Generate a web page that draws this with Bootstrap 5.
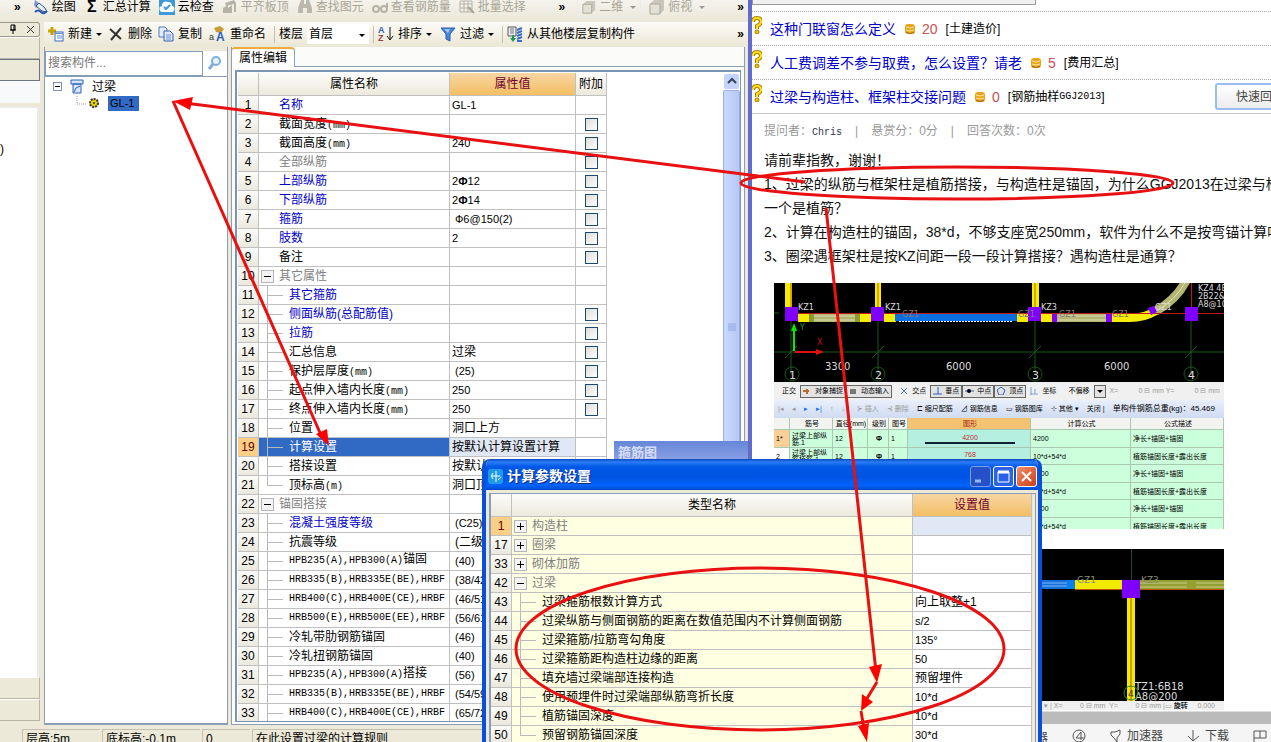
<!DOCTYPE html>
<html lang="zh-CN">
<head>
<meta charset="utf-8">
<meta name="viewport" content="width=device-width, initial-scale=1">
<title>计算参数设置</title>
<link href="https://cdn.jsdelivr.net/npm/bootstrap@5.3.0/dist/css/bootstrap.min.css" rel="stylesheet">
<script src="https://cdn.jsdelivr.net/npm/bootstrap@5.3.0/dist/js/bootstrap.bundle.min.js"></script>
<style>
body{font:12px/18px "Liberation Sans","Noto Sans CJK SC",sans-serif;color:#000;background:#fff}
button{border:0;background:none;padding:0;color:inherit;font:inherit;white-space:nowrap}
svg{display:block;flex:none}
.desktop{height:100vh;overflow:hidden;white-space:nowrap}
.app{width:752px;flex:none;background:#ece9d8;border-right:4px solid #5f6ccb;overflow:hidden}
.bar1{height:22px;padding:0 4px 0 14px;background:linear-gradient(#f4f3ec,#ebe8d8)}
.bar1 .items{height:14px}
.bar2{height:25px;background:linear-gradient(#fbfaf6,#ebe7d5)}
.tool{display:inline-flex;align-items:center;gap:4px}
.bar1 .tool{gap:3px}
.tool.off{color:#a8a595}
.caret-s{border:3px solid transparent;border-top-color:#000;border-bottom:0;display:inline-block}
.off .caret-s{border-top-color:#999}
.vsep{width:1px;height:17px;background:#c5c1b0}
.floor{appearance:none;border:0;width:62px;height:20px;background:#fff;font-size:12px;line-height:16px;padding:0 2px}
.dock{width:40px;flex:none}
.dock .cap{height:15px;border:1px solid #9d9a8c;border-left:0;border-radius:0 3px 3px 0;padding-right:4px}
.slab{height:22px;border:1px solid #b9b6a6;border-left:0;border-top-color:#fff}
.dockbody{border-right:2px solid #8b9eb8;background:#fff;margin-right:1px}
.srch{border:1px solid #7f9db9;height:25px;width:158px;padding:0 2px;font-size:12px;border-radius:0;outline:0}
.srch::placeholder{color:#777;opacity:1}
.comp{width:184px;flex:none;border:1px solid #8b9eb8;border-width:0 1px}
.treebox{background:#fff;border-top:1px solid #8b9eb8;border-bottom:2px solid #8b9eb8;padding-top:1px}
.pm{width:9px;height:9px;border:1px solid #7f95b0;background:#fff;position:relative;flex:none}
.pm::after{content:"";position:absolute;left:1px;right:1px;top:3px;height:1px;background:#000}
.seltag{background:#316ac5;padding:0 4px 0 2px;line-height:15px;font-size:11px;width:31px}
.props{border:1px solid #8b9eb8;border-top:0;background:#fcfcfa;margin-right:3px}
.tabtop{height:20px;background:#fbfbfa;border-bottom:1px solid #8b9eb8}
.tabon{width:64px;height:20px;background:#fff;border:1px solid #8b9eb8;border-top:2px solid #efaa3c;border-bottom:0;border-radius:4px 4px 0 0;text-align:center;line-height:18px;margin-left:-1px}
.gridbox{border:1px solid #7d95b5;border-width:2px 1px 1px 2px;background:#fff;margin:3px 3px 2px;padding:1px 0 0 1px;overflow:hidden}
.grid{border-collapse:separate;border-spacing:0;table-layout:fixed;flex:none}
.grid th,.grid td{border-right:1px solid #c0c0c0;border-bottom:1px solid #c0c0c0;padding:0;height:19px;line-height:18px;font-weight:400;overflow:hidden}
.grid thead th{height:23px;line-height:22px;background:linear-gradient(#fcfcfa,#ece9dd);text-align:center}
.grid thead th.hot{background:linear-gradient(#f7d5a4,#f3bf63);color:#700030}
.grid tbody th{background:linear-gradient(#fbfbf8,#ebe9de);text-align:center}
.grid tbody th.hot{background:#fbcf85;color:#600}
.grid td{padding-left:2px}
.grid td.lvl{padding-left:20px}
.grid td.leaf{padding-left:30px;background-image:linear-gradient(#b9b9b9,#b9b9b9),linear-gradient(#b9b9b9,#b9b9b9);background-repeat:no-repeat;background-position:8px 0,8px 9px;background-size:1px 100%,16px 1px}
.grid td.leaf.end{background-size:1px 9px,16px 1px}
.grid td.in{padding-left:5px}
.num{font-size:11px}
.mono{font:10px/1 "Liberation Mono","Noto Sans CJK SC",monospace}
.mono b{font:12px/1 "Noto Sans CJK SC",sans-serif}
.blue{color:#0000c8}.gray{color:#808080}
.grid td.sel{background-color:#316ac5;color:#fff}
.grid td.cur{background:#e0e8f5}
.tg{width:13px;height:13px;border:1px solid #b5b5b5;background:#f4f4f4;display:inline-block;vertical-align:-2px;margin-right:5px;position:relative}
.tg::after,.tg.plus::before{content:"";position:absolute;left:2px;top:5px;width:7px;height:1px;background:#000}
.tg.plus::before{left:5px;top:2px;width:1px;height:7px}
.grid input{appearance:none;width:13px;height:13px;border:1px solid #1c4a70;background:linear-gradient(135deg,#dcdcd7,#fff);display:block;margin:1px auto 0 7px}
.vscroll{width:17px;background:#fff}
.sbtn{height:17px;width:17px;background:#c3d3fb;border:1px solid #fff;border-radius:3px}
.thumb{background:linear-gradient(90deg,#c9d8fd,#b5c8f5);border:1px solid #98b0e5;border-radius:2px}
.status{height:13px;padding-left:22px;overflow:hidden}
.status span{border-left:1px solid #c5c2b2;border-top:1px solid #c5c2b2;padding-left:3px;margin-right:2px;height:20px;line-height:18px}
.dockwin{left:614px;top:441px;width:134px;height:22px;background:linear-gradient(#6686d8,#8fa3e6);color:#d5dcf8;font-weight:700;padding:3px 4px;font-size:13px}
.dlg{left:482px;top:459px;width:560px;bottom:-20px;background:#ece9d8;border:4px solid #0a4fdc;border-top:0;border-radius:8px 8px 0 0;overflow:hidden}
.dlgbar{height:31px;margin:0 -4px;padding:3px 5px 0 6px;background:linear-gradient(#0b48b8,#2a7cf8 10%,#0058e6 25%,#0054e3 60%,#0264fe 85%,#0048c8);color:#fff;font-weight:700;font-size:14px;text-shadow:1px 1px #0a2a80}
.wbtn{width:21px;height:21px;border:1px solid #fff;border-radius:3px;background:#2a62e8}
.wbtn.dim{background:#2450c8;border-color:#7d9cea}.wbtn.x{background:linear-gradient(135deg,#f0906c,#d03c14)}
.dgrid{border:1px solid #8b9eb8;border-left-width:2px;background:#ece9d8;margin:3px 2px 0 3px}
.dlg td{background-color:#fff}.dlg td:nth-child(2){background-color:#ffffe1}
.web{min-width:0;overflow:hidden;background:#fff}
.tabline{height:12px;border-bottom:1px dotted #aaa}
.tabline i{display:block;height:5px;width:284px;background:#f0f0f0;border:1px solid #999;border-top:0}
.q{height:34px;border-bottom:1px dotted #aaa;font-size:12px}
.q.last{border-bottom:1px solid #c8c8c8}
.q a{font-size:14px;color:#00c;text-decoration:none;margin:0 8px}
.q em{font-style:normal;font-size:14px;color:#c85050;margin:0 8px 0 6px}
.fast{border:2px solid #9dbdf0;border-radius:3px;width:90px;height:27px;background:linear-gradient(#fff,#ececec);color:#444;margin-left:auto;margin-right:-34px}
.meta{height:34px;padding-left:12px;color:#999;line-height:34px}
.meta i{font-style:normal;margin:0 13px}
.meta a{color:#335;text-decoration:none;font:10px "Liberation Mono",monospace}
.post{padding:0 0 0 12px;font-size:14px;line-height:24px;color:#111}
.shot{width:450px;margin-left:22px;overflow:hidden;font-size:7px;line-height:12px}
.cadbar{height:18px;background:#f0f0f0;padding:0 4px;justify-content:space-between}
.cadbar button{border:1px solid #666;height:13px;padding:0 2px;display:inline-flex;align-items:center;gap:2px;background:#e3e3e3}
.cadbar.two{background:linear-gradient(#e9effb,#cfdbf0);padding-right:9px}
.kg{font-size:8px}
.off2{color:#999}
.rebar{table-layout:fixed;width:450px;border-collapse:separate;border-spacing:0;line-height:7px}
.rebar th,.rebar td{border:solid #a8c8b0;border-width:0 1px 1px 0;padding:0 0 0 2px;height:18px;overflow:hidden;font-weight:400}
.rebar tr:nth-child(even) td{height:17px}
.rebar thead th{height:12px;text-align:center;background:#f3f3f0}
.rebar td{background:#ccffdc}
.rebar .fig{background:#b5efdf;color:#c03030;text-align:center}
.rebar .fig u{display:block;height:2px;width:90px;background:#123;margin:1px auto 0}
.greybar{height:13px;background:#bbb;border-top:1px solid #ddd}
.bstat{height:18px;background:#f5f5f5;color:#444;padding-left:284px;padding-top:5px}
.bstat button{display:inline-flex;align-items:center;gap:5px}
.marks{left:0;top:0;pointer-events:none}
</style>
</head>
<body>
<svg width="0" height="0" class="position-absolute">
<symbol id="i-pen" viewBox="0 0 16 16"><path d="M2 1l5 4-4 4-2-3z" fill="#7d97cf"/><path d="M6 4l6 5 2 4-5-1-6-5z" fill="#e9eefb" stroke="#33518f"/><path d="M2 13q3-3 6 0t6-1" fill="none" stroke="#2754b8" stroke-width="2"/></symbol>
<symbol id="i-cloud" viewBox="0 0 16 16"><rect width="16" height="16" fill="#3d9ad6"/><path d="M4 13a3 3 0 0 1-1-6 4 4 0 0 1 6-4 4 4 0 0 1 4 4 3 3 0 0 1-1 6z" fill="#fff"/><path d="M5 8l2 2 4-4" stroke="#3d9ad6" stroke-width="2" fill="none"/></symbol>
<symbol id="i-board" viewBox="0 0 16 16"><path d="M1 14V9l5-3v3l4-3v8zM3 4l9-3 2 3v9h-2V5L4 7z" fill="#b5b3a5"/></symbol>
<symbol id="i-bino" viewBox="0 0 16 16"><path d="M4 1h3v4h2V1h3l3 8v5h-5V9H6v5H1V9z" fill="#bbb9ad"/></symbol>
<symbol id="i-glass" viewBox="0 0 16 16"><g fill="none" stroke="#b5b3a5" stroke-width="2"><circle cx="4" cy="10" r="3"/><circle cx="12" cy="10" r="3"/><path d="M7 10h2M15 9V4"/></g></symbol>
<symbol id="i-tbl" viewBox="0 0 16 16"><path d="M1 2h12v11H1zM1 5h12M1 9h12M5 2v11M9 2v11" fill="none" stroke="#b5b3a5"/><path d="M9 8l6 6" stroke="#a5a395" stroke-width="2"/></symbol>
<symbol id="i-box" viewBox="0 0 16 16"><path d="M1 5l4-4h10v10l-4 4H1z" fill="#c9c7bb"/><path d="M1 5h10v10H1z" fill="#e3e1d6" stroke="#aaa89a"/></symbol>
<symbol id="i-new" viewBox="0 0 16 16"><path d="M4 1v8M0 5h8" stroke="#c7a500" stroke-width="3"/><rect x="7" y="6" width="8" height="9" fill="#fff" stroke="#3a6cc0"/><path d="M7 7.500h8M9 10h5M9 12h5" stroke="#5f90d8"/></symbol>
<symbol id="i-del" viewBox="0 0 16 16"><path d="M2 3l11 10M13 2L3 14" stroke="#333" stroke-width="2"/></symbol>
<symbol id="i-copy" viewBox="0 0 16 16"><path d="M1 1h6l2 2v8H1z" fill="#e3ecfb" stroke="#5478b8"/><path d="M6 5h6l3 3v7H6z" fill="#dce8fb" stroke="#3a62b0"/><path d="M8 9h5M8 11h5M8 13h5" stroke="#6b93d5"/></symbol>
<symbol id="i-ren" viewBox="0 0 16 16"><path d="M5 2l6-2 4 3-3 4-5-1z" fill="#c79a3a"/><text x="0" y="14" font-size="9" fill="#333">a</text><text x="7" y="15" font-size="12" font-weight="700" fill="#2a5cb8">A</text></symbol>
<symbol id="i-az" viewBox="0 0 16 16"><text x="0" y="7" font-size="9" font-weight="700" fill="#3560b0">A</text><text x="0" y="15" font-size="9" font-weight="700" fill="#a04040">Z</text><path d="M12 1v12M9 10l3 4 3-4" fill="none" stroke="#111"/></symbol>
<symbol id="i-fun" viewBox="0 0 16 16"><path d="M1 2h14l-5 6v7l-4-2V8z" fill="#4d86e0" stroke="#2a58b0"/><path d="M4 3h6L8 7z" fill="#a5c8fa"/></symbol>
<symbol id="i-fl" viewBox="0 0 16 16"><path d="M1 1h8v9H1z" fill="#eee" stroke="#555"/><path d="M3 3h4M3 5h4M3 7h4" stroke="#777"/><path d="M10 4l5-2M10 7l5-2M10 10l5-2M10 13l5-2M10 15h5" stroke="#3a6cc8" stroke-width="2"/><path d="M5 9v3H3l3 4 3-4H7V9z" fill="#1d9a4a"/></symbol>
<symbol id="i-q" viewBox="0 0 10 18"><path d="M1 6q0-4 4-4t4 4q0 2-4 4v3" fill="none" stroke="#a87b00" stroke-width="4"/><path d="M1 6q0-4 4-4t4 4q0 2-4 4v3" fill="none" stroke="#ffe01a" stroke-width="2"/><circle cx="5" cy="16" r="2" fill="#f0c800" stroke="#a87b00"/></symbol>
<symbol id="i-coin" viewBox="0 0 12 12"><rect x="1" y="1" width="10" height="10" rx="3" fill="#eaa51c"/><path d="M2 4q4 2 8 0M2 7q4 2 8 0" fill="none" stroke="#ffe9a0"/><path d="M2 9.500q4 2 8 0" fill="none" stroke="#a8650a"/></symbol>
</svg>

<div class="desktop d-flex position-relative">
<div class="app d-flex flex-column">
  <div class="bar1"><div class="items d-flex align-items-center gap-2">
    <b>»</b>
    <button class="tool ms-1"><svg width="16" height="16"><use href="#i-pen"/></svg>绘图</button>
    <button class="tool"><b class="fs-6 text-center" style="width:16px">Σ</b>汇总计算</button>
    <button class="tool"><svg width="16" height="16"><use href="#i-cloud"/></svg>云检查</button>
    <button class="tool off"><svg width="16" height="16"><use href="#i-board"/></svg>平齐板顶</button>
    <button class="tool off"><svg width="16" height="16"><use href="#i-bino"/></svg>查找图元</button>
    <button class="tool off"><svg width="16" height="16"><use href="#i-glass"/></svg>查看钢筋量</button>
    <button class="tool off"><svg width="16" height="16"><use href="#i-tbl"/></svg>批量选择</button>
    <b class="ms-auto me-1">»</b>
    <button class="tool off border border-secondary-subtle px-1"><svg width="14" height="14"><use href="#i-box"/></svg>二维<i class="caret-s ms-1"></i></button>
    <button class="tool off"><svg width="16" height="16"><use href="#i-box"/></svg>俯视<i class="caret-s ms-1"></i></button>
    <b class="ms-4">»</b>
  </div></div>
  <div class="d-flex flex-fill" style="min-height:0">
    <div class="dock d-flex flex-column">
      <div class="cap d-flex align-items-center justify-content-end gap-2"><svg width="10" height="10"><path d="M2 6h6M3 1h4v5H3zM6 1v5M5 6v4" fill="none" stroke="#000"/></svg><svg width="9" height="9"><path d="M1 1l7 7M8 1L1 8" stroke="#333"/></svg></div>
      <div class="slab"></div><div class="slab border-secondary"></div><div class="slab mb-1 bg-light border-0"></div>
      <div class="dockbody flex-fill border-top border-secondary-subtle pt-4"><div class="pt-2">)</div></div>
      <div class="slab"></div><div class="slab mb-1"></div>
    </div>
    <div class="flex-fill d-flex flex-column ps-1" style="min-width:0">
      <div class="bar2 d-flex align-items-center ps-1 pe-1">
        <div class="d-flex align-items-center" style="gap:6px">
        <button class="tool"><svg width="16" height="16"><use href="#i-new"/></svg>新建<i class="caret-s"></i></button>
        <button class="tool"><svg width="16" height="16"><use href="#i-del"/></svg>删除</button>
        <button class="tool"><svg width="16" height="16"><use href="#i-copy"/></svg>复制</button>
        <button class="tool"><svg width="18" height="16"><use href="#i-ren"/></svg>重命名</button>
        </div>
        <i class="vsep ms-2 me-1"></i><label for="floor" class="me-1">楼层</label>
        <div class="position-relative"><select id="floor" class="floor"><option>首层</option></select><i class="caret-s position-absolute end-0 top-50 me-1"></i></div>
        <i class="vsep mx-1"></i>
        <button class="tool me-2"><svg width="16" height="16"><use href="#i-az"/></svg>排序<i class="caret-s"></i></button>
        <button class="tool me-2"><svg width="16" height="16"><use href="#i-fun"/></svg>过滤<i class="caret-s"></i></button>
        <i class="vsep me-1"></i>
        <button class="tool"><svg width="16" height="16"><use href="#i-fl"/></svg>从其他楼层复制构件</button>
        <b class="ms-auto">»</b>
      </div>
      <div class="d-flex flex-fill" style="min-height:0">
        <div class="comp d-flex flex-column pt-1">
          <div class="d-flex align-items-center bg-white"><input class="srch" type="text" placeholder="搜索构件..." aria-label="搜索构件"><button class="ms-1" aria-label="搜索"><svg width="16" height="16"><circle cx="9" cy="6" r="4" fill="#e8f2fd" stroke="#7db0e0" stroke-width="2"/><path d="M6 9l-4 5" stroke="#7db0e0" stroke-width="3"/></svg></button></div>
          <div class="treebox flex-fill">
            <div class="d-flex align-items-center ps-2 gap-2"><i class="pm"></i><svg width="14" height="15"><path d="M1 1h12v4H1zM3 5h8v9H3z" fill="#d5e5fb" stroke="#2a62b8"/><path d="M4 13q1-5 6-6" fill="none" stroke="#2a62b8"/></svg><span>过梁</span></div>
            <div class="d-flex align-items-center gap-2 ps-4"><svg width="20" height="14"><path d="M8 0v8h10" fill="none" stroke="#999" stroke-dasharray="1 1"/></svg><svg width="11" height="11" style="margin-left:-8px"><circle cx="5" cy="5" r="4" fill="#e6d000" stroke="#333" stroke-width="2" stroke-dasharray="2 1"/><circle cx="5" cy="5" r="1" fill="#333"/></svg><span class="seltag">GL-1</span></div>
          </div>
        </div>
        <div class="flex-fill d-flex flex-column props" style="margin-left:3px;min-width:0">
          <div class="tabtop"><div class="tabon">属性编辑</div></div>
          <div class="gridbox flex-fill d-flex" style="min-height:0">
            <table class="grid align-self-start" style="width:369px">
            <colgroup><col style="width:21px"><col style="width:191px"><col style="width:126px"><col style="width:31px"></colgroup>
            <thead><tr><th></th><th>属性名称</th><th class="hot">属性值</th><th>附加</th></tr></thead>
            <tbody>
            <tr><th>1</th><td class="lvl blue">名称</td><td class="num">GL-1</td><td></td></tr>
            <tr><th>2</th><td class="lvl">截面宽度<span class="mono">(mm)</span></td><td></td><td><input type="checkbox" aria-label="附加 2"></td></tr>
            <tr><th>3</th><td class="lvl">截面高度<span class="mono">(mm)</span></td><td class="num">240</td><td><input type="checkbox" aria-label="附加 3"></td></tr>
            <tr><th>4</th><td class="lvl gray">全部纵筋</td><td></td><td><input type="checkbox" aria-label="附加 4"></td></tr>
            <tr><th>5</th><td class="lvl blue">上部纵筋</td><td class="num">2<b>Ф</b>12</td><td><input type="checkbox" aria-label="附加 5"></td></tr>
            <tr><th>6</th><td class="lvl blue">下部纵筋</td><td class="num">2<b>Ф</b>14</td><td><input type="checkbox" aria-label="附加 6"></td></tr>
            <tr><th>7</th><td class="lvl blue">箍筋</td><td class="in num">Ф6@150(2)</td><td><input type="checkbox" aria-label="附加 7"></td></tr>
            <tr><th>8</th><td class="lvl blue">肢数</td><td class="num">2</td><td><input type="checkbox" aria-label="附加 8"></td></tr>
            <tr><th>9</th><td class="lvl">备注</td><td></td><td><input type="checkbox" aria-label="附加 9"></td></tr>
            <tr><th>10</th><td class="gray"><button class="tg" aria-label="折叠"></button>其它属性</td><td></td><td></td></tr>
            <tr><th>11</th><td class="leaf blue">其它箍筋</td><td></td><td></td></tr>
            <tr><th>12</th><td class="leaf blue">侧面纵筋(总配筋值)</td><td></td><td><input type="checkbox" aria-label="附加 12"></td></tr>
            <tr><th>13</th><td class="leaf blue">拉筋</td><td></td><td><input type="checkbox" aria-label="附加 13"></td></tr>
            <tr><th>14</th><td class="leaf">汇总信息</td><td>过梁</td><td><input type="checkbox" aria-label="附加 14"></td></tr>
            <tr><th>15</th><td class="leaf">保护层厚度<span class="mono">(mm)</span></td><td class="in num">(25)</td><td><input type="checkbox" aria-label="附加 15"></td></tr>
            <tr><th>16</th><td class="leaf">起点伸入墙内长度<span class="mono">(mm)</span></td><td class="num">250</td><td><input type="checkbox" aria-label="附加 16"></td></tr>
            <tr><th>17</th><td class="leaf">终点伸入墙内长度<span class="mono">(mm)</span></td><td class="num">250</td><td><input type="checkbox" aria-label="附加 17"></td></tr>
            <tr><th>18</th><td class="leaf">位置</td><td>洞口上方</td><td></td></tr>
            <tr><th class="hot">19</th><td class="leaf sel">计算设置</td><td class="cur">按默认计算设置计算</td><td></td></tr>
            <tr><th>20</th><td class="leaf">搭接设置</td><td>按默认搭接设置计算</td><td></td></tr>
            <tr><th>21</th><td class="leaf end">顶标高<span class="mono">(m)</span></td><td>洞口顶标高</td><td></td></tr>
            <tr><th>22</th><td class="gray"><button class="tg" aria-label="折叠"></button>锚固搭接</td><td></td><td></td></tr>
            <tr><th>23</th><td class="leaf blue">混凝土强度等级</td><td class="in num">(C25)</td><td></td></tr>
            <tr><th>24</th><td class="leaf">抗震等级</td><td class="in">(二级抗震)</td><td></td></tr>
            <tr><th>25</th><td class="leaf mono">HPB235(A),HPB300(A)<b>锚固</b></td><td class="in num">(40)</td><td></td></tr>
            <tr><th>26</th><td class="leaf mono">HRB335(B),HRB335E(BE),HRBF</td><td class="in num">(38/42)</td><td></td></tr>
            <tr><th>27</th><td class="leaf mono">HRB400(C),HRB400E(CE),HRBF</td><td class="in num">(46/51)</td><td></td></tr>
            <tr><th>28</th><td class="leaf mono">HRB500(E),HRB500E(EE),HRBF</td><td class="in num">(56/61)</td><td></td></tr>
            <tr><th>29</th><td class="leaf">冷轧带肋钢筋锚固</td><td class="in num">(46)</td><td></td></tr>
            <tr><th>30</th><td class="leaf">冷轧扭钢筋锚固</td><td class="in num">(40)</td><td></td></tr>
            <tr><th>31</th><td class="leaf mono">HPB235(A),HPB300(A)<b>搭接</b></td><td class="in num">(56)</td><td></td></tr>
            <tr><th>32</th><td class="leaf mono">HRB335(B),HRB335E(BE),HRBF</td><td class="in num">(54/59)</td><td></td></tr>
            <tr><th>33</th><td class="leaf mono">HRB400(C),HRB400E(CE),HRBF</td><td class="in num">(65/72)</td><td></td></tr>
            </tbody></table>
            <div class="vscroll d-flex flex-column ms-auto"><button class="sbtn" aria-label="向上"><svg width="15" height="15"><path d="M4 9l4-4 4 4" fill="none" stroke="#345" stroke-width="2"/></svg></button><div class="thumb flex-fill"><svg width="15" height="480"><path d="M4 233h8M4 235h8M4 237h8M4 239h8" stroke="#8fa8e0"/></svg></div></div>
          </div>
        </div>
      </div>
    </div>
  </div>
  <div class="status d-flex mt-1"><span style="width:78px">层高:5m</span><span style="width:98px">底标高:-0.1m</span><span style="width:48px">0</span><span class="flex-fill">在此设置过梁的计算规则</span></div>
</div>

<div class="web flex-fill d-flex flex-column">
  <div class="tabline"><i></i></div>
  <div class="q d-flex align-items-center"><svg width="10" height="18" class="mb-2"><use href="#i-q"/></svg><a href="#">这种门联窗怎么定义</a><svg width="12" height="12"><use href="#i-coin"/></svg><em>20</em>[土建造价]</div>
  <div class="q d-flex align-items-center"><svg width="10" height="18" class="mb-2"><use href="#i-q"/></svg><a href="#">人工费调差不参与取费，怎么设置？请老</a><svg width="12" height="12"><use href="#i-coin"/></svg><em>5</em>[费用汇总]</div>
  <div class="q last d-flex align-items-center"><svg width="10" height="18" class="mb-2"><use href="#i-q"/></svg><a href="#">过梁与构造柱、框架柱交接问题</a><svg width="12" height="12"><use href="#i-coin"/></svg><em>0</em>[钢筋抽样<span class="mono">GGJ2013</span>]<button class="fast">快速回复</button></div>
  <div class="meta">提问者：<a href="#">Chris</a><i>|</i>悬赏分：0分<i>|</i>回答次数：0次</div>
  <div class="post">请前辈指教，谢谢！<br>1、过梁的纵筋与框架柱是植筋搭接，与构造柱是锚固，为什么GGJ2013在过梁与框架柱<br>一个是植筋？<br>2、计算在构造柱的锚固，38*d，不够支座宽250mm，软件为什么不是按弯锚计算呢？<br>3、圈梁遇框架柱是按KZ间距一段一段计算搭接？遇构造柱是通算？</div>
  <div class="shot" style="margin-top:15px">
    <svg width="450" height="99" viewBox="0 0 450 99" font-family="DejaVu Sans,sans-serif" fill="#ddd">
      <rect width="450" height="99" fill="#000"/>
      <path d="M17 38v54M104 38v54M261 38v54M417 38v54M0 69h450M11 75l12-12M98 75l12-12M255 75l12-12M411 75l12-12M0 30h5" stroke="#155a1c" fill="none"/>
      <path d="M11 0h7v24h-7zM101 0h6v24h-6zM258 0h7v24h-7zM24 30h73v9H24zM110 30h12v9h-12zM243 30h11v9h-11zM267 30h11v9h-11z" fill="#f5ec00"/>
      <path d="M104 0v24M261 0v24M17 0v24" stroke="#c06010"/>
      <path d="M35 31h51v8H35zM283 31h50v8h-50z" fill="#b3b573"/><path d="M36 33h49M36 37h49M284 33h48M284 37h48" stroke="#dcdcae"/>
      <path d="M35 31h5v8h-5zM81 31h5v8h-5z" fill="#8c9a35"/>
      <path d="M338 35h18q14 0 26-7" stroke="#f5ec00" stroke-width="8" fill="none"/>
      <path d="M382 28q20-11 30-30" stroke="#b3b573" stroke-width="9" fill="none"/><path d="M382 28q20-11 30-30" stroke="#e2e2bc" fill="none"/>
      <path d="M121 30h122v8H121z" fill="#0a6fe0"/><path d="M125 38.500h114" stroke="#fff" stroke-dasharray="2 1"/>
      <path d="M24 30.500h426M417.500 0v24" stroke="#c01818"/>
      <path d="M11 24h13v14H11zM97 24h13v14H97zM254 24h13v14h-13zM411 24h13v14h-13zM278 31h5v8h-5zM332 31h6v8h-6zM374 25l6-2 3 6-6 3z" fill="#8000ff"/>
      <path d="M20 68V45" stroke="#0e0" stroke-width="2"/><path d="M17 48l3-8 3 8z" fill="#0e0"/><path d="M21 69h22" stroke="#e01010" stroke-width="2"/><path d="M42 66l8 3-8 3z" fill="#e01010"/>
      <g font-size="8"><text x="24" y="27">KZ1</text><text x="111" y="27">KZ1</text><text x="267" y="27">KZ3</text><text x="424" y="8">KZ4 4B</text><text x="424" y="16">2B22&amp;</text><text x="424" y="24">A8@10</text><text x="381" y="27">GZ1</text>
      <text x="26" y="47" fill="#0a0">Y</text><text x="43" y="62" fill="#c01010">X</text>
      <g fill="#8a7474"><text x="128" y="34">GZ1</text><text x="244" y="34">GZ1</text><text x="285" y="34">GZ1</text><text x="338" y="34">GZ1</text></g></g>
      <g font-size="11"><text x="51" y="87" font-size="10">3300</text><text x="172" y="87" font-size="10">6000</text><text x="330" y="87" font-size="10">6000</text><text x="15" y="96">1</text><text x="101" y="96">2</text><text x="258" y="96">3</text><text x="414" y="96">4</text></g>
      <g fill="none" stroke="#155a1c"><circle cx="18" cy="91" r="7"/><circle cx="104" cy="91" r="7"/><circle cx="261" cy="91" r="7"/><circle cx="417" cy="91" r="7"/></g>
    </svg>
    <div class="cadbar d-flex align-items-center"><span class="ps-1">正交</span><div class="d-flex"><button><svg width="10" height="8"><path d="M0 4h6M4 2v5" stroke="#c06a20" stroke-width="2"/></svg>对象捕捉</button><button><svg width="10" height="8"><path d="M1 2h6v5H1z" fill="#777"/></svg>动态输入</button></div><svg width="8" height="8" class="ms-1"><path d="M1 1l6 6M7 1L1 7" stroke="#4a80c8"/></svg>交点<div class="d-flex"><button><svg width="10" height="8"><path d="M0 7h9M5 0v7" stroke="#2a62b8"/></svg>垂点</button><button><svg width="10" height="8"><path d="M0 4h9" stroke="#2a62b8"/><circle cx="4" cy="4" r="2"/></svg>中点</button><button><svg width="10" height="8"><path d="M4 0l4 3-2 5H2L0 3z" fill="none" stroke="#2a62b8"/></svg>顶点</button></div><svg width="8" height="8"><path d="M0 7h8M1 0v8M5 2v5" stroke="#7fa5d8"/></svg><span class="pe-2">坐标</span>不偏移<button><i class="caret-s"></i></button><span class="off2">X=</span><span class="off2 ps-3">0 ⊟ mm Y=</span><span class="off2 ps-3">0 ⊟ mm</span></div>
    <div class="cadbar two d-flex align-items-center"><span class="off2">|◂</span><span class="off2">◂</span><span class="text-primary">▸</span><span class="text-primary">▸|</span><span class="off2">↑</span><span class="off2">↓ |</span><span class="off2">⊱ 插入</span><span class="off2">⊰ 删除</span><span>⊏ 缩尺配筋</span><span>⊿ 钢筋信息</span><span>▭ 钢筋图库</span><span>⊹ 其他 ▾</span><span>关闭 |</span><span class="kg">单构件钢筋总重(kg)：45.469</span></div>
    <div style="height:111px;overflow:hidden">
    <table class="rebar"><colgroup><col style="width:16px"><col style="width:43px"><col style="width:35px"><col style="width:21px"><col style="width:19px"><col style="width:123px"><col style="width:100px"><col style="width:93px"></colgroup>
    <thead><tr><th></th><th>筋号</th><th>直径(mm)</th><th>级别</th><th>图号</th><th style="background:#f4c271;color:#a02010">图形</th><th>计算公式</th><th>公式描述</th></tr></thead>
    <tbody>
    <tr><td style="background:#fbcf95">1*</td><td>过梁上部纵<br>筋.1</td><td>12</td><td class="text-center"><b>Ф</b></td><td>1</td><td class="fig">4200<u></u></td><td>4200</td><td>净长+锚固+锚固</td></tr>
    <tr><td class="bg-white">2</td><td>过梁上部纵<br>筋植筋.1</td><td>12</td><td class="text-center"><b>Ф</b></td><td>1</td><td class="fig">768<u></u></td><td>10*d+54*d</td><td>植筋锚固长度+露出长度</td></tr>
    <tr><td></td><td></td><td></td><td></td><td></td><td></td><td>4200</td><td>净长+锚固+锚固</td></tr>
    <tr><td></td><td></td><td></td><td></td><td></td><td></td><td>10*d+54*d</td><td>植筋锚固长度+露出长度</td></tr>
    <tr><td></td><td></td><td></td><td></td><td></td><td></td><td>4200</td><td>净长+锚固+锚固</td></tr>
    <tr><td></td><td></td><td></td><td></td><td></td><td></td><td>10*d+54*d</td><td>植筋锚固长度+露出长度</td></tr>
    </tbody></table></div>
  </div>
  <div class="shot" style="margin-top:20px">
    <svg width="450" height="152" viewBox="0 0 450 152" font-family="DejaVu Sans,sans-serif" fill="#ddd">
      <rect width="450" height="152" fill="#000"/><path d="M357.500 0v31" stroke="#24483c"/>
      <path d="M200 31h93v9h-93z" fill="#1670dc"/><path d="M200 34h93M200 37h93" stroke="#7db5f5"/><path d="M293 31h8v9h-8z" fill="#0a80f0"/>
      <path d="M301 31h47v9h-47zM353 49h8v103h-8z" fill="#f2ea00"/><path d="M366 31h84v9h-84z" fill="#94a030"/><path d="M366 34h84M366 38h84" stroke="#c8cc8c"/><path d="M413 31h9v9h-9z" fill="#94a030"/>
      <path d="M301 40.500h149M357 49v103" stroke="#c05010"/><path d="M348 31h18v18h-18z" fill="#8000ff"/>
      <g font-size="9" fill="#8c8c7c"><text x="303" y="34">GZ1</text><text x="367" y="34">KZ3</text></g>
      <g font-size="10"><text x="361" y="141">TZ1:6B18</text><text x="361" y="151">A8@200</text></g>
      <circle cx="357" cy="144" r="7" fill="none" stroke="#2a8a30"/><text x="354" y="148" font-size="9" fill="#433">4</text>
    </svg>
    <div class="off2" style="height:9px;line-height:9px;background:#f0f0f0;padding-left:270px">▾ | X= &nbsp; &nbsp; &nbsp; &nbsp; 0 ⊟ mm &nbsp;Y= &nbsp; &nbsp; &nbsp; &nbsp; 0 ⊟ mm |▭ <b class="text-dark">旋转</b> &nbsp; &nbsp; 0.000</div>
  </div>
  <div class="mt-auto">
    <div class="greybar"></div>
    <div class="bstat d-flex gap-4"><span>器</span>
      <button aria-label="模式"><svg width="14" height="14"><circle cx="7" cy="7" r="6" fill="none" stroke="#555"/><path d="M9 11V3L4 9h8" fill="none" stroke="#555"/></svg></button>
      <button><svg width="12" height="14"><path d="M1 3h4l5-2v4L7 9v4L4 9 1 6z" fill="none" stroke="#555"/></svg>加速器</button>
      <button><svg width="13" height="14"><path d="M6 1v11M1 7l5 5 6-5" fill="none" stroke="#555"/></svg>下载</button>
      <button aria-label="标记"><svg width="14" height="14"><path d="M1 14V2h12v7H1M7 2v7" fill="none" stroke="#555"/></svg></button>
    </div>
  </div>
</div>

<div class="dockwin position-absolute">箍筋图</div>
<section class="dlg position-absolute" aria-label="计算参数设置">
  <div class="dlgbar d-flex align-items-center"><svg width="15" height="15" class="me-1"><rect width="15" height="15" rx="3" fill="#1d9be8"/><path d="M8 2v11M3 7h9M5 4q-3 3 0 6M10 11l3-3" fill="none" stroke="#fff"/></svg>计算参数设置
    <div class="ms-auto d-flex" style="gap:2px"><button class="wbtn dim" aria-label="最小化"><svg width="19" height="19"><path d="M4 14h6" stroke="#9ab4f0" stroke-width="3"/></svg></button><button class="wbtn" aria-label="最大化"><svg width="19" height="19"><path d="M4 5h11v10H4z" fill="none" stroke="#fff"/><path d="M4 5h11" stroke="#fff" stroke-width="3"/></svg></button><button class="wbtn x" aria-label="关闭"><svg width="19" height="19"><path d="M5 5l9 9M14 5l-9 9" stroke="#fff" stroke-width="2"/></svg></button></div></div>
  <div class="dgrid">
    <table class="grid" style="width:541px"><colgroup><col style="width:21px"><col style="width:401px"><col style="width:119px"></colgroup>
    <thead><tr><th></th><th>类型名称</th><th class="hot">设置值</th></tr></thead>
    <tbody>
    <tr><th class="hot">1</th><td class="gray"><button class="tg plus" aria-label="展开"></button>构造柱</td><td class="cur"></td></tr>
    <tr><th>17</th><td class="gray"><button class="tg plus" aria-label="展开"></button>圈梁</td><td></td></tr>
    <tr><th>33</th><td class="gray"><button class="tg plus" aria-label="展开"></button>砌体加筋</td><td></td></tr>
    <tr><th>42</th><td class="gray"><button class="tg" aria-label="折叠"></button>过梁</td><td></td></tr>
    <tr><th>43</th><td class="leaf">过梁箍筋根数计算方式</td><td>向上取整+1</td></tr>
    <tr><th>44</th><td class="leaf">过梁纵筋与侧面钢筋的距离在数值范围内不计算侧面钢筋</td><td class="num">s/2</td></tr>
    <tr><th>45</th><td class="leaf">过梁箍筋/拉筋弯勾角度</td><td class="num">135°</td></tr>
    <tr><th>46</th><td class="leaf">过梁箍筋距构造柱边缘的距离</td><td class="num">50</td></tr>
    <tr><th>47</th><td class="leaf">填充墙过梁端部连接构造</td><td>预留埋件</td></tr>
    <tr><th>48</th><td class="leaf">使用预埋件时过梁端部纵筋弯折长度</td><td class="num">10*d</td></tr>
    <tr><th>49</th><td class="leaf">植筋锚固深度</td><td class="num">10*d</td></tr>
    <tr><th>50</th><td class="leaf end">预留钢筋锚固深度</td><td class="num">30*d</td></tr>
    </tbody></table>
  </div>
</section>

<svg class="marks position-absolute" width="1271" height="742" fill="none" stroke="#e81010" stroke-width="3">
  <path d="M805 182L185 103M173 101l148 334M826 208l50 464M877 682l-11 18M861 711l3 18"/>
  <g fill="#f00" stroke="none"><path d="M173 101l20-4-3 13zM329 446l-13-12 11-5zM877 683l-8-16 13-3zM861 711l1-17 11 8zM867 742l-9-16 11-3z"/></g>
  <ellipse cx="957" cy="183" rx="216" ry="16"/><ellipse cx="760" cy="649" rx="244" ry="81"/>
</svg>
</div>
</body>
</html>
